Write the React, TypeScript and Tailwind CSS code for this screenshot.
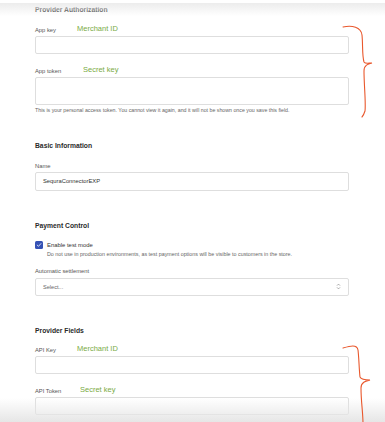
import type { ReactNode } from "react";

function Label({ text, note, width }: { text: string; note?: string; width: string }) {
  return (
    <div className="flex h-[12px] items-center">
      <span className={`${width} shrink-0 text-[5.8px] text-[#555]`}>{text}</span>
      {note && <span className="-mt-[2px] text-[7.5px] text-[#7aab45]">{note}</span>}
    </div>
  );
}

function Heading({ children, className }: { children: ReactNode; className?: string }) {
  return (
    <div className={`flex h-[10px] items-center text-[6.75px] font-bold text-[#2a2a2a] ${className ?? ""}`}>
      {children}
    </div>
  );
}

function Field({ h, children }: { h: string; children?: ReactNode }) {
  return (
    <div className={`${h} flex w-full items-center rounded-[2px] border border-[#dedede] bg-white px-[7px]`}>
      {children}
    </div>
  );
}

function Brace({ top, tail }: { top: string; tail: string }) {
  return (
    <svg className={`absolute left-[338px] ${top}`} width="40" height="100" viewBox="0 0 40 100" fill="none">
      <path d={tail} stroke="#e9582d" strokeWidth="1.1" strokeLinecap="round" />
    </svg>
  );
}

export default function App() {
  return (
    <div
      className="relative h-[422px] w-[385px] overflow-hidden bg-white"
      style={{ fontFamily: '"Liberation Sans", Arial, sans-serif' }}
    >
      <div className="w-[349px] pl-[35px] pt-[5px]">
        <Heading>Provider Authorization</Heading>

        <div className="mt-[9px]">
          <Label text="App key" note="Merchant ID" width="w-[42px]" />
          <Field h="h-[18px]" />
        </div>

        <div className="mt-[11px]">
          <Label text="App token" note="Secret key" width="w-[48px]" />
          <Field h="h-[28px]" />
          <div className="mt-[2px] flex h-[8px] items-center whitespace-nowrap text-[5.25px] text-[#666]">
            This is your personal access token. You cannot view it again, and it will not be shown once you save this field.
          </div>
        </div>

        <Heading className="mt-[26px]">Basic Information</Heading>
        <div className="mt-[9px]">
          <Label text="Name" width="w-[42px]" />
          <Field h="h-[19px]">
            <span className="text-[5.8px] text-[#333]">SequraConnectorEXP</span>
          </Field>
        </div>

        <Heading className="mt-[30px]">Payment Control</Heading>
        <div className="mt-[10px] flex h-[8px] items-center gap-[4px]">
          <div className="flex h-[8px] w-[8px] items-center justify-center rounded-[1.5px] bg-[#3552b5]">
            <svg width="6" height="6" viewBox="0 0 6 6" fill="none">
              <path d="M1.2 3.1 L2.5 4.3 L4.9 1.6" stroke="white" strokeWidth="0.8" strokeLinecap="round" strokeLinejoin="round" />
            </svg>
          </div>
          <span className="text-[5.9px] text-[#333]">Enable test mode</span>
        </div>
        <div className="mt-[1px] flex h-[7px] items-center whitespace-nowrap pl-[12px] text-[5.35px] text-[#666]">
          Do not use in production environments, as test payment options will be visible to customers in the store.
        </div>
        <div className="mt-[8px]">
          <div className="flex h-[13px] items-center text-[5.8px] text-[#555]">Automatic settlement</div>
          <Field h="h-[18px]">
            <div className="flex w-full items-center justify-between">
              <span className="text-[5.6px] text-[#666]">Select...</span>
              <svg width="5" height="7" viewBox="0 0 5 7" fill="none">
                <path d="M1 2.6 L2.5 1.1 L4 2.6 M1 4.4 L2.5 5.9 L4 4.4" stroke="#888" strokeWidth="0.7" />
              </svg>
            </div>
          </Field>
        </div>

        <Heading className="mt-[30px]">Provider Fields</Heading>
        <div className="mt-[8px]">
          <Label text="API Key" note="Merchant ID" width="w-[42px]" />
          <Field h="h-[18px]" />
        </div>
        <div className="mt-[11px]">
          <Label text="API Token" note="Secret key" width="w-[45px]" />
          <Field h="h-[18px]" />
        </div>
      </div>

      {/* sticky header shadow and bottom fade */}
      <div className="pointer-events-none absolute left-0 right-0 top-[3px] h-[13px] bg-gradient-to-b from-[#ececec] to-white/0" />
      <div className="pointer-events-none absolute bottom-0 left-0 right-0 h-[24px] bg-gradient-to-b from-white/0 to-[#e6e6e6]" />

      {/* hand-drawn annotation braces */}
      <Brace
        top="top-[25px]"
        tail="M5 2 C14 0 23 2 24 10 C25 20 24 30 26 37 C27 39 31 38 34 38 C30 39 26 40 26 46 C26 60 28 78 27 86 C26 89 25 91 24 92"
      />
      <Brace
        top="top-[344px]"
        tail="M5 4 C12 2 19 0 20 6 C21 14 21 24 22 33 C23 35 28 36 32 36 C28 37 23 38 23 44 C23 58 25 68 25 80"
      />
    </div>
  );
}
